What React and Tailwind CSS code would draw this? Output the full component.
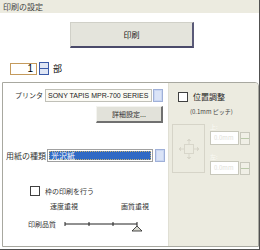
import React from 'react'

const font = { fontFamily: '"Noto Sans CJK JP", "Liberation Sans", sans-serif' }

const DropButton = ({ className = '' }) => (
  <div className={`w-[10px] h-[13px] border border-[#9fb0d8] bg-[#c9d6f2] flex items-center justify-center ${className}`}>
    <div className="w-[6px] h-[9px] bg-[#dbe4f7]" />
  </div>
)

const Spinner = ({ disabled }) => (
  <div className={`w-[10px] h-[13px] flex flex-col border ${disabled ? 'border-[#c8c8bc]' : 'border-[#3a5aa8]'}`}>
    <div className={`flex-1 ${disabled ? 'bg-[#f0efe6]' : 'bg-[#dfe6f5]'} border-b ${disabled ? 'border-[#b8c8a8]' : 'border-[#3a5aa8]'}`} />
    <div className={`flex-1 ${disabled ? 'bg-[#f0efe6]' : 'bg-[#dfe6f5]'}`} />
  </div>
)

const Checkbox = () => <div className="w-[10px] h-[10px] border border-[#404040] bg-white" />

const PadIcon = () => (
  <svg width="22" height="22" viewBox="0 0 22 22" fill="none" stroke="#d8d6ca" strokeWidth="1">
    <rect x="6.5" y="6.5" width="9" height="9" />
    <path d="M11 1v5M11 16v5M1 11h5M16 11h5" />
    <path d="M9 3l2-2 2 2M9 19l2 2 2-2M3 9l-2 2 2 2M19 9l2 2-2 2" fill="#d8d6ca" />
  </svg>
)

export default function App() {
  return (
    <div className="w-[260px] h-[250px] bg-white text-[8px] leading-none text-[#333] flex flex-col border-r border-b border-[#505050]" style={font}>
      <div className="h-[13px] bg-[#ecebe0] flex items-center pl-[3px] text-[#444]">印刷の設定</div>

      <div className="mt-[9px] ml-[70px] w-[124px] h-[26px] bg-[#e4e4dc] border border-[#d0d0c8] border-b-2 border-r-2 border-b-[#4a4a6a] border-r-[#5a5a78] flex items-center justify-center text-[#222]">
        印刷
      </div>

      <div className="mt-[14px] ml-[10px] flex items-center gap-[2px]">
        <div className="w-[27px] h-[12px] border border-[#c49a5c] bg-white flex items-center justify-end pr-[3px] text-[10px] text-black" style={{ fontFamily: '"Liberation Sans", sans-serif' }}>1</div>
        <Spinner />
        <span className="ml-[2px] text-[9px] text-black">部</span>
      </div>

      <div className="mt-[7px] ml-[2px] flex-1 flex border border-[#a8a8a0] rounded-tr-[4px] overflow-hidden">
        <div className="w-[165px] bg-white flex flex-col">
          <div className="mt-[6px] flex items-center">
            <span className="w-[42px] text-right pr-[2px] text-[7px]">プリンタ</span>
            <div className="w-[107px] h-[13px] border border-[#c0c0b8] bg-[#fbfaf4] flex items-center pl-[2px] text-[7px] text-[#222] whitespace-nowrap overflow-hidden" style={{ fontFamily: '"Liberation Sans", sans-serif' }}>
              SONY TAPIS MPR-700 SERIES
            </div>
            <DropButton className="ml-[1px]" />
          </div>

          <div className="mt-[4px] ml-[93px] w-[67px] h-[17px] bg-[#e2e2da] border border-[#f4f4f0] border-b-2 border-r-2 border-b-[#707070] border-r-[#707070] flex items-center justify-center text-[7px]">
            詳細設定...
          </div>

          <div className="mt-[26px] flex items-center">
            <span className="ml-[3px] w-[40px] text-[8px]">用紙の種類</span>
            <div className="ml-[1px] w-[106px] h-[13px] border border-[#a0a0a0] bg-white p-[1px]">
              <div className="w-full h-full bg-[#316ac5] border border-dotted border-[#c8b070] flex items-center pl-[1px] text-white text-[8px]">光沢紙</div>
            </div>
            <DropButton className="ml-[2px]" />
          </div>

          <div className="mt-[24px] ml-[27px] flex items-center gap-[5px]">
            <Checkbox />
            <span className="text-[7px]">枠の印刷を行う</span>
          </div>

          <div className="mt-[7px] flex text-[7px]">
            <span className="ml-[47px]">速度重視</span>
            <span className="ml-[43px]">画質重視</span>
          </div>

          <div className="mt-[11px] flex items-start">
            <span className="ml-[25px] text-[7px]">印刷品質</span>
            <svg width="80" height="12" viewBox="0 0 80 12" className="ml-[8px] -mt-[1px]">
              <path d="M1 4h72M1 2v4M25 2v4M49 2v4M73 2v4" stroke="#222" strokeWidth="1" />
              <path d="M73 6l-5 5h10z" fill="#d8d8d0" stroke="#222" strokeWidth="0.8" />
            </svg>
          </div>
        </div>

        <div className="flex-1 bg-[#ecebe0] border-l border-[#e0dfd4] flex flex-col">
          <div className="mt-[9px] ml-[9px] flex items-center gap-[5px]">
            <Checkbox />
            <span className="text-[8px] text-[#222]">位置調整</span>
          </div>
          <div className="mt-[7px] ml-[21px] text-[6px] text-[#444]">(0.1mm ピッチ)</div>

          <div className="mt-[9px] ml-[3px] flex gap-[5px]">
            <div className="w-[33px] h-[49px] border border-[#d6d4c8] flex items-center justify-center">
              <PadIcon />
            </div>
            <div className="flex flex-col">
              <span className="text-[6px] text-[#fafaf4] h-[7px]">上:</span>
              <div className="flex items-center gap-[1px]">
                <div className="w-[29px] h-[14px] border border-[#c8c8bc] bg-white flex items-center pl-[3px] text-[6px] text-[#e0e0d8]">0.0mm</div>
                <Spinner disabled />
              </div>
              <span className="mt-[9px] text-[6px] text-[#fafaf4] h-[7px]">左:</span>
              <div className="flex items-center gap-[1px]">
                <div className="w-[29px] h-[14px] border border-[#c8c8bc] bg-white flex items-center pl-[3px] text-[6px] text-[#e0e0d8]">0.0mm</div>
                <Spinner disabled />
              </div>
            </div>
          </div>
        </div>
      </div>
      <div className="h-[2px]" />
    </div>
  )
}
